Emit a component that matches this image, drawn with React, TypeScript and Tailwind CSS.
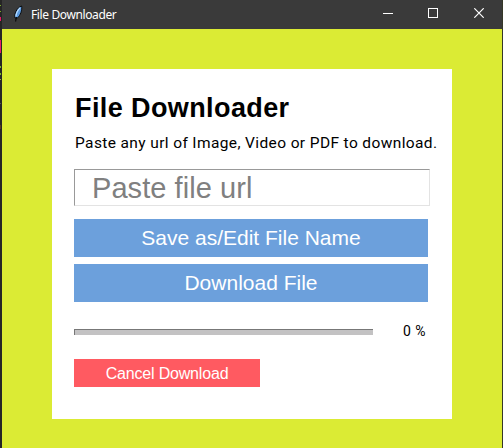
import React from "react";

function Feather() {
  return (
    <svg width="10" height="18" viewBox="0 0 10 18" className="shrink-0">
      <path d="M2 13C0.8 9 4 2.6 8.6 1C9.4 5 7.4 10.5 4.4 13Z" fill="#5b9be0" stroke="#050505" strokeWidth="0.9" />
      <path d="M7.2 2.8C4.8 5 3.2 8 2.9 11.5" fill="none" stroke="#b9dcff" strokeWidth="1.2" />
      <path d="M3.4 12L2.6 16.5" stroke="#090909" strokeWidth="1.2" />
    </svg>
  );
}

function TitleBar() {
  return (
    <header className="flex h-[29px] items-center bg-[#3a3a3a] text-white">
      <div className="pb-[2px] pl-[11px]"><Feather /></div>
      <span className="ml-2 w-[86px] whitespace-nowrap font-['Noto_Sans',sans-serif] text-[12px] leading-[16px] tracking-[-0.38px]">File Downloader</span>
      <div className="ml-auto flex h-full items-center pr-[18px] pb-[3px]">
        <svg width="10" height="10" className="mr-[35px]" shapeRendering="crispEdges"><path d="M0 5.5H10" stroke="white" /></svg>
        <svg width="10" height="10" className="mr-9" shapeRendering="crispEdges"><path d="M.5 .5H9.5V9.5H.5Z" stroke="white" fill="none" /></svg>
        <svg width="10" height="10"><path d="M.3 .3L9.7 9.7M9.7 .3L.3 9.7" stroke="white" strokeWidth="1.2" /></svg>
      </div>
    </header>
  );
}

const edgeMarks = [
  { top: 5, height: 1, color: "#79a928" },
  { top: 11, height: 1, color: "#79a928" },
  { top: 17, height: 4, color: "#e51b68" },
  { top: 40, height: 13, color: "#e51b68" },
  { top: 66, height: 2, color: "#79b928" },
  { top: 73, height: 2, color: "#79b928" },
  { top: 79, height: 1, color: "#9bb33b" },
  { top: 103, height: 1, color: "#555555" },
  { top: 125, height: 4, color: "#57391f" },
];

export default function App() {
  return (
    <div className="flex h-[448px] w-[503px] overflow-hidden bg-[#252525] font-['Liberation_Sans',Arial,sans-serif]">
      <div className="relative w-[2px] shrink-0">
        {edgeMarks.map((m) => (
          <i key={m.top} className="absolute left-0 w-px" style={{ top: m.top, height: m.height, background: m.color }} />
        ))}
      </div>
      <div className="flex w-[500px] shrink-0 flex-col">
        <TitleBar />
        <main className="flex-1 bg-[#dbeb34] px-[50px] pt-10">
          <section className="flex h-[350px] w-[400px] flex-col bg-white pl-[22px]">
            <h1 className="mt-[23px] h-8 whitespace-nowrap pl-px text-[27px] font-bold leading-8 tracking-[0.4px] text-black">File Downloader</h1>
            <p className="mt-[9px] h-5 whitespace-nowrap pl-px font-[Roboto,sans-serif] text-[15.5px] leading-5 tracking-[0.38px] text-black">Paste any url of Image, Video or PDF to download.</p>
            <input
              aria-label="File URL"
              placeholder="Paste file url"
              className="mt-[16px] h-[37px] w-[356px] shrink-0 border border-t-[#999] border-l-[#999] border-r-[#e3e3e3] border-b-[#e3e3e3] bg-white pl-[17px] pt-[2px] text-[29px] leading-[33px] tracking-[0.06px] outline-none placeholder:text-[#808080] placeholder:opacity-100"
            />
            <button className="mt-[13px] h-[38px] w-[354px] shrink-0 bg-[#6ca0dc] text-[21px] leading-[38px] text-white">Save as/Edit File Name</button>
            <button className="mt-[7px] h-[38px] w-[354px] shrink-0 bg-[#6ca0dc] text-[21px] leading-[38px] text-white">Download File</button>
            <div className="mt-[19px] flex h-[20px] w-[354px] items-center">
              <div className="mt-[2px] h-[6px] w-[299px] border-l border-t border-[#777] bg-[#c3c2c3]" />
              <span className="ml-[30px] whitespace-nowrap font-[Roboto,sans-serif] text-[14px] leading-5 tracking-[0.5px] text-black">0 %</span>
            </div>
            <button className="mt-[18px] h-[28px] w-[186px] shrink-0 bg-[#ff5a61] pt-px text-[16px] leading-[27px] tracking-[-0.18px] text-white">Cancel Download</button>
          </section>
        </main>
      </div>
      <div className="w-px bg-[#353728]" />
    </div>
  );
}
